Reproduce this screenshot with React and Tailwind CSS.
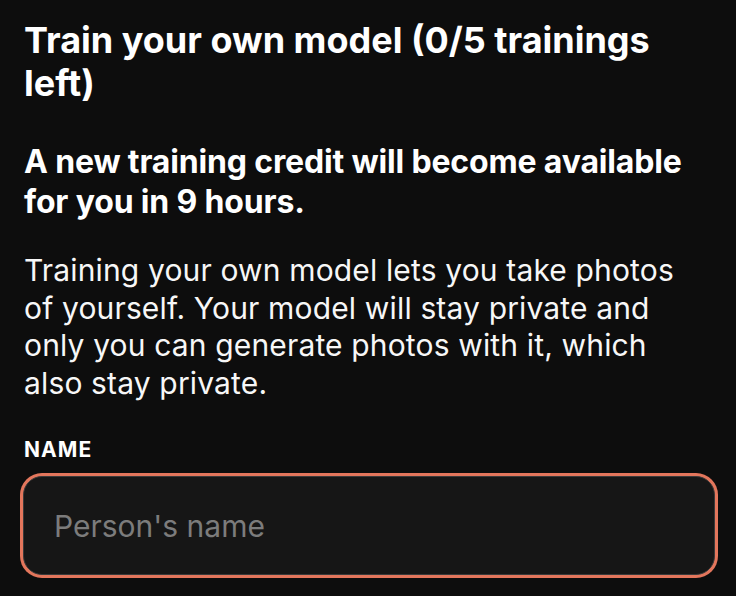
import React from 'react';

const App = () => {
  return (
    <div
      className="min-h-screen bg-[#0d0d0d] text-white px-6 pt-[19px]"
      style={{ fontFamily: 'Inter, "Noto Sans", sans-serif' }}
    >
      <div className="max-w-[676px]">
        <h1 className="text-[36px] leading-[43.2px] font-bold">
          Train your own model (0/5 trainings left)
        </h1>
        <h2 className="mt-[37px] text-[32px] leading-[40px] font-bold tracking-[-0.005em]">
          A new training credit will become available for you in 9 hours.
        </h2>
        <p className="mt-[30px] text-[30px] leading-[37.5px] tracking-[0.005em] text-[#f7f7f7]">
          Training your own model lets you take photos of yourself. Your model will stay private and
          only you can generate photos with it, which also stay private.
        </p>
      </div>
      <label className="block mt-[36px] text-[21px] leading-6 font-bold tracking-[0.05em]">NAME</label>
      <div className="mt-[14px] -ml-px w-[692px]">
        <input
          autoFocus
          type="text"
          placeholder="Person's name"
          className="block w-full h-[99px] rounded-[19px] bg-[#161616] border border-[#3a3a3a] pl-[30px] text-[30px] text-white placeholder:text-[#7c7c7c] outline-none ring-[3px] ring-[#e3765c] caret-white"
        />
      </div>
    </div>
  );
};

export default App;
